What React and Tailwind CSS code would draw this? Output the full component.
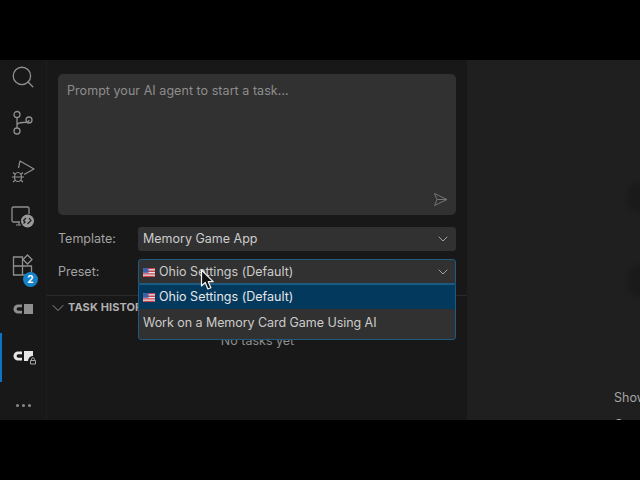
import React from "react";
import { Search, ChevronDown } from "lucide-react";

const DebugIcon = () => (
  <svg width="24" height="24" viewBox="0 0 24 24" fill="none" stroke="#8f8f8f" strokeWidth="1.2">
    <path d="M7.500 8 L9 1 L23 9 L13 14.500" strokeLinejoin="round" />
    <ellipse cx="7" cy="17" rx="3.500" ry="4.500" />
    <path d="M3.500 17h7M2 12.500l2.500 2M12 12.500l-2.500 2M2 22l2.500-2M12 22l-2.500-2M1 17h2.500M10.500 17H13" />
  </svg>
);

const SourceIcon = () => (
  <svg width="24" height="26" viewBox="0 0 24 26" fill="none" stroke="#8f8f8f" strokeWidth="1.300">
    <circle cx="6" cy="4.500" r="3" />
    <circle cx="6" cy="21" r="3" />
    <circle cx="18" cy="10" r="3" />
    <path d="M6 7.500V18M6 15.500c0-2.500 2-3 6-3 3 0 6-.5 6-2.500" />
  </svg>
);

const RemoteIcon = () => (
  <svg width="24" height="24" viewBox="0 0 24 24" fill="none">
    <path d="M9 17H2.500A1.500 1.500 0 0 1 1 15.500v-12A1.500 1.500 0 0 1 2.500 2h14A1.500 1.500 0 0 1 18 3.500V9" stroke="#8f8f8f" strokeWidth="1.300" />
    <path d="M5 20h5M8 17v3" stroke="#8f8f8f" strokeWidth="1.200" />
    <circle cx="16.500" cy="16" r="6.500" fill="#9a9a9a" />
    <path d="M15 13l-2.500 2.500 1 1M14.500 16.500l-2 2M18 13l2 2.500-3.500 3.500" stroke="#1a1a1a" strokeWidth="1.200" />
  </svg>
);

const ExtensionsIcon = () => (
  <svg width="22" height="22" viewBox="0 0 22 22" fill="none" stroke="#8f8f8f" strokeWidth="1.300">
    <path d="M1.500 3h9v18h-9zM1.500 12h18v9h-9" />
    <path d="M15.500 1l4.500 4.500-4.500 4.500-4.500-4.500z" />
  </svg>
);

const ClineIcon = ({ color, lock }) => (
  <div className="relative flex items-center">
    <svg width="22" height="12" viewBox="0 0 22 12">
      <path d="M6 1.500a4.500 4.500 0 1 0 0 9h4v-2.800H6.300a1.700 1.700 0 1 1 0-3.400H10V1.500z" fill={color} />
      <rect x="12" y="1" width="9" height="10" fill={color} />
    </svg>
    {lock && (
      <svg className="absolute left-[16px] top-[6px]" width="10" height="10" viewBox="0 0 10 10">
        <circle cx="5" cy="5" r="5" fill="#181818" />
        <path d="M2.500 4.500h5V8h-5zM3.500 4.500V3.300a1.500 1.500 0 0 1 3 0v1.200" fill="none" stroke="#b5b5b5" strokeWidth="0.900" />
      </svg>
    )}
  </div>
);

const Flag = () => (
  <svg width="12" height="9" viewBox="0 0 12 9" className="shrink-0 rounded-[1px]">
    <rect width="12" height="9" fill="#e8e8e8" />
    <path d="M0 0h12v1.300H0zM0 2.600h12v1.300H0zM0 5.200h12v1.300H0zM0 7.700h12V9H0z" fill="#c9404f" />
    <rect width="5.500" height="4.800" fill="#3f5fa8" />
  </svg>
);

const Chevron = () => <ChevronDown size={16} strokeWidth={1.300} color="#b5b5b5" />;

const ActivityBar = () => (
  <div className="w-[47px] shrink-0 pt-[2px] border-r border-[#1e1e1e] bg-[#181818] flex flex-col items-center relative">
    <div className="h-[30px] flex items-center mr-[1px]">
      <Search size={26} strokeWidth={1.200} color="#8f8f8f" />
    </div>
    <div className="h-[30px] mt-[16px] flex items-center"><SourceIcon /></div>
    <div className="h-[30px] mt-[19px] flex items-center"><DebugIcon /></div>
    <div className="h-[30px] mt-[15px] flex items-center"><RemoteIcon /></div>
    <div className="h-[30px] mt-[18px] flex items-center relative">
      <ExtensionsIcon />
      <span className="absolute left-[11px] top-[22px] w-[15px] h-[15px] rounded-full bg-[#1581c9] text-white text-[10px] font-bold flex items-center justify-center">2</span>
    </div>
    <div className="h-[30px] mt-[14px] flex items-center"><ClineIcon color="#8f8f8f" /></div>
    <div className="h-[30px] mt-[17px] flex items-center"><ClineIcon color="#e6e6e6" lock /></div>
    <div className="h-[30px] mt-[19px] flex items-center gap-[3px]">
      <span className="w-[3px] h-[3px] rounded-full bg-[#8a8a8a]" />
      <span className="w-[3px] h-[3px] rounded-full bg-[#8a8a8a]" />
      <span className="w-[3px] h-[3px] rounded-full bg-[#8a8a8a]" />
    </div>
    <div className="absolute left-0 top-[273px] w-[2px] h-[49px] bg-[#0f72c4]" />
  </div>
);

const Sidebar = () => (
  <div className="w-[421px] shrink-0 bg-[#181818] border-r border-[#1e1e1e] relative flex flex-col text-[12.500px]">
    <div className="pt-[14px] px-[11px]">
      <div className="h-[141px] rounded-[5px] bg-[#313131] px-[9px] py-[7px] relative">
        <p className="leading-[19px] text-[#8e8e8e] tracking-[0.050px]">Prompt your AI agent to start a task...</p>
        <svg className="absolute right-[8px] bottom-[8px]" width="15" height="15" viewBox="0 0 15 15" fill="none" stroke="#757575" strokeWidth="1" strokeLinejoin="round">
          <path d="M1.500 1.500L14 7.500 1.500 13.500 4 7.500zM4 7.500h10" />
        </svg>
      </div>
      <div className="flex items-center mt-[12px] h-[24px]">
        <span className="w-[80px] pt-[1px] text-[#a3a3a3]">Template:</span>
        <div className="flex-1 h-[24px] bg-[#313131] rounded-[3px] pl-[5px] pr-[5px] flex items-center justify-between text-[#cccccc]">
          <span className="pt-[1px]">Memory Game App</span>
          <Chevron />
        </div>
      </div>
      <div className="flex items-center mt-[8px] h-[25px]">
        <span className="w-[80px] pt-[1px] text-[#a3a3a3]">Preset:</span>
        <div className="flex-1 h-[25px] bg-[#313131] rounded-t-[3px] border border-[#1c5a80] pl-[4px] pr-[4px] flex items-center justify-between text-[#cccccc]">
          <span className="flex items-center gap-[4px] pt-[1px] tracking-[0.020px]"><Flag /> Ohio Settings (Default)</span>
          <Chevron />
        </div>
      </div>
    </div>
    <div className="mt-[11px] border-t border-[#2a2a2a] h-[24px] flex items-center pl-[1px]">
      <ChevronDown size={20} strokeWidth={1} color="#a8a8a8" />
      <span className="text-[11px] font-bold text-[#b0b0b0] tracking-[0.100px]">TASK HISTORY</span>
    </div>
    <p className="mt-[14px] pl-[1px] text-center leading-[16px] text-[#8e8e8e]">No tasks yet</p>

    <div className="absolute left-[91px] top-[224px] w-[318px] h-[56px] bg-[#313131] border border-[#1c5a80] rounded-b-[3px] text-[#cccccc]">
      <div className="h-[24px] bg-[#04395e] text-[#e6e6e6] flex items-center gap-[4px] pl-[4px] tracking-[0.020px]"><Flag /> Ohio Settings (Default)</div>
      <div className="h-[29px] flex items-center pl-[4px] tracking-[-0.050px]">Work on a Memory Card Game Using AI</div>
    </div>
  </div>
);

const Editor = () => (
  <div className="flex-1 bg-[#1f1f1f] relative overflow-hidden text-[12.500px]">
    <div className="absolute left-[160px] top-[122px] w-[24px] h-[30px] rounded-full bg-[#1a1a1a] blur-[2px]" />
    <div className="absolute left-[160px] top-[206px] w-[24px] h-[30px] rounded-full bg-[#1a1a1a] blur-[2px]" />
    <span className="absolute left-[146px] top-[329px] text-[#a3a3a3] whitespace-nowrap">Show</span>
    <span className="absolute left-[146px] top-[356px] text-[#a3a3a3] whitespace-nowrap">Open</span>
  </div>
);

const App = () => {
  return (
    <div className="w-[640px] h-[480px] bg-black overflow-hidden relative font-['Inter',sans-serif]">
      <div className="h-[60px]" />
      <div className="h-[360px] flex overflow-hidden">
        <ActivityBar />
        <Sidebar />
        <Editor />
      </div>
      <div className="h-[60px] bg-black relative" />
      <svg className="absolute left-[200px] top-[269px]" width="16" height="22" viewBox="0 0 16 22">
        <path d="M1.500 1v16l3.700-3.500 2.700 6.500 3-1.300-2.700-6h5z" fill="#111" stroke="#f2f2f2" strokeWidth="1.200" strokeLinejoin="round" />
      </svg>
    </div>
  );
};

export default App;
